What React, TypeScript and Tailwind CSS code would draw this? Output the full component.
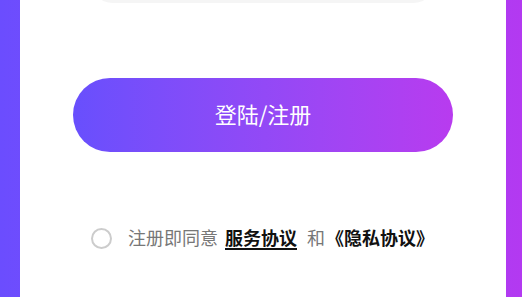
import React from "react";

export default function App() {
  return (
    <div
      className="flex h-[297px] w-[522px] overflow-hidden bg-gradient-to-r from-[#6b4dfe] to-[#b339f1]"
      style={{ fontFamily: '"Noto Sans CJK SC", "Noto Sans", sans-serif' }}
    >
      <div className="ml-[20px] flex h-full w-[486px] flex-col items-center bg-white">
        <div className="-mt-[45px] h-[48px] w-[348px] shrink-0 rounded-full bg-[#f5f5f5]" />
        <button className="mt-[75px] flex h-[74px] w-[380px] shrink-0 items-center justify-center rounded-full bg-gradient-to-r from-[#684ffd] to-[#b83bef] pb-[3px] text-[22px] font-normal text-white">
          登陆/注册
        </button>
        <div className="mt-[76px] flex w-full items-center pl-[71px] text-[18px] leading-none">
          <span className="h-[21px] w-[21px] shrink-0 rounded-full border-2 border-[#cccccc]" />
          <span className="ml-[16px] -translate-y-[2px] text-[#777777]">注册即同意</span>
          <span className="ml-[7px] -translate-y-[2px] font-bold text-[#111111] underline decoration-[1.5px] underline-offset-[3px]">服务协议</span>
          <span className="ml-[10px] -translate-y-[2px] text-[#777777]">和</span>
          <span className="ml-[1px] -translate-y-[2px] font-bold text-[#111111]">《隐私协议》</span>
        </div>
      </div>
    </div>
  );
}
